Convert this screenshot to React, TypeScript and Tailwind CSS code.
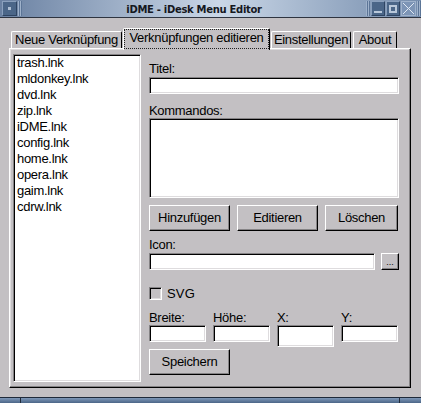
import React from "react";

const raised =
  "border border-t-white border-l-white border-r-black border-b-black shadow-[inset_-1px_-1px_0_#858385]";
const sunken =
  "border border-t-[#858385] border-l-[#858385] border-r-white border-b-white shadow-[inset_1px_1px_0_#000,inset_-1px_-1px_0_#dedcde]";

const files = [
  "trash.lnk",
  "mldonkey.lnk",
  "dvd.lnk",
  "zip.lnk",
  "iDME.lnk",
  "config.lnk",
  "home.lnk",
  "opera.lnk",
  "gaim.lnk",
  "cdrw.lnk",
];

function Stripes({ className }: { className: string }) {
  return (
    <div className={"flex h-[15px] " + className}>
      <div className="w-px bg-[#9fb2cb]" />
      <div className="w-px bg-[#5c7597]" />
      <div className="w-px bg-[#9fb2cb]" />
      <div className="w-px bg-[#5c7597]" />
    </div>
  );
}

function TitleBar() {
  return (
    <div className="flex h-[18px] items-start border-b border-[#2e3440] bg-[linear-gradient(to_right,#6a81a2,#cad7e7_52%,#748cac)]">
      <div className="ml-[2px] mt-px flex h-[15px] w-[15px] items-center justify-center border border-t-[#8aa0bd] border-l-[#8aa0bd] border-r-[#2f4563] border-b-[#2f4563] bg-[#4b6688]">
        <div className="h-[3px] w-[3px] bg-[#aebfd4]" />
      </div>
      <Stripes className="ml-px mt-px" />
      <div className="flex-1 pt-[4px] text-center font-['DejaVu_Sans',sans-serif] text-[10px] font-bold leading-[12px] text-[#15181f]">
        iDME - iDesk Menu Editor
      </div>
      <Stripes className="mt-px" />
      <div className="ml-px mt-px flex h-[15px] w-[14px] items-end justify-center border border-t-[#8aa0bd] border-l-[#8aa0bd] border-r-[#2f4563] border-b-[#2f4563] bg-[#4b6688] pb-[2px]">
        <div className="h-[2px] w-[8px] bg-[#b9c8da]" />
      </div>
      <div className="ml-px mt-px flex h-[15px] w-[14px] items-center justify-center border border-t-[#8aa0bd] border-l-[#8aa0bd] border-r-[#2f4563] border-b-[#2f4563] bg-[#4b6688]">
        <div className="h-[8px] w-[8px] border-2 border-[#b9c8da]" />
      </div>
      <div className="ml-px mt-px flex h-[15px] w-[15px] items-center justify-center border border-[#9fb2cb] bg-[#7d95b6]">
        <svg width="13" height="13" viewBox="0 0 13 13">
          <path d="M1 1 L12 12 M12 1 L1 12" stroke="#e0e8f2" strokeWidth="1" />
        </svg>
      </div>
      <Stripes className="ml-px mt-px" />
    </div>
  );
}

function Tab({ label, className }: { label: string; className: string }) {
  return (
    <div
      className={
        "flex h-[17px] items-center justify-center rounded-t-[2px] border-t border-l border-r border-t-white border-l-white border-r-black leading-[14px] " +
        className
      }
    >
      {label}
    </div>
  );
}

function Button({ label, className }: { label: string; className: string }) {
  return (
    <div
      className={
        "flex h-[26px] items-center justify-center leading-[14px] " +
        raised +
        " " +
        className
      }
    >
      {label}
    </div>
  );
}

export default function App() {
  return (
    <div className="flex h-[403px] w-[421px] flex-col overflow-hidden bg-[#c3c0c3] font-['Liberation_Sans',Arial,sans-serif] text-[13px] tracking-[-0.3px] text-black">
      <TitleBar />

      {/* tabs */}
      <div className="ml-[11px] mt-[10px] flex h-[20px] items-end">
        <Tab label="Neue Verknüpfung" className="w-[111px]" />
        <div className="relative z-10 -mb-[2px] ml-px flex h-[22px] w-[147px] items-start justify-center rounded-t-[2px] border-t border-l border-r border-t-white border-l-white border-r-black bg-[#c3c0c3] pt-[2px] leading-[14px]">
          <div className="absolute left-0 right-0 top-0 bottom-[1px] border border-dotted border-[#202020]" />
          Verknüpfungen editieren
        </div>
        <Tab label="Einstellungen" className="ml-px w-[80px]" />
        <Tab label="About" className="ml-[2px] w-[44px]" />
      </div>

      {/* pane */}
      <div className="ml-[9px] flex h-[340px] w-[402px] border border-t-white border-l-white border-r-black border-b-black pl-[3px] pt-[5px] shadow-[inset_-1px_-1px_0_#858385,inset_1px_1px_0_#dedcde]">
        <div className={"h-[328px] w-[128px] bg-white pl-[3px] leading-[16px] " + sunken}>
          {files.map((f) => (
            <div key={f}>{f}</div>
          ))}
        </div>

        <div className="ml-[8px] mt-[8px] flex w-[250px] flex-col">
          <div className="leading-[14px]">Titel:</div>
          <div className={"mt-px h-[17px] bg-white " + sunken} />

          <div className="mt-[10px] leading-[14px]">Kommandos:</div>
          <div className={"h-[80px] bg-white " + sunken} />

          <div className="mt-[7px] flex">
            <Button label="Hinzufügen" className="w-[81px]" />
            <Button label="Editieren" className="ml-[7px] w-[81px]" />
            <Button label="Löschen" className="ml-[7px] w-[73px]" />
          </div>

          <div className="mt-[7px] leading-[14px]">Icon:</div>
          <div className="mt-px flex">
            <div className={"h-[17px] w-[226px] bg-white " + sunken} />
            <div
              className={
                "ml-[6px] flex h-[17px] w-[18px] items-end justify-center pb-[2px] text-[9px] leading-none tracking-normal " +
                raised
              }
            >
              ...
            </div>
          </div>

          <div className="mt-[17px] flex h-[13px] items-center">
            <div className={"h-[13px] w-[13px] bg-[#c3c0c3] " + sunken} />
            <span className="ml-[5px] leading-[14px] tracking-[0.2px]">SVG</span>
          </div>

          <div className="mt-[11px] grid grid-cols-[57px_57px_57px_57px] items-start gap-x-[7px]">
            <div>
              <div className="leading-[14px]">Breite:</div>
              <div className={"h-[17px] bg-white " + sunken} />
            </div>
            <div>
              <div className="leading-[14px]">Höhe:</div>
              <div className={"h-[17px] bg-white " + sunken} />
            </div>
            <div>
              <div className="leading-[14px]">X:</div>
              <div className={"h-[22px] bg-white " + sunken} />
            </div>
            <div>
              <div className="leading-[14px]">Y:</div>
              <div className={"h-[17px] bg-white " + sunken} />
            </div>
          </div>

          <div className="mt-[2px] flex">
            <Button label="Speichern" className="w-[81px]" />
          </div>
        </div>
      </div>

      {/* bottom frame */}
      <div className="mt-auto flex h-[6px] border-t border-[#1f2a3a]">
        <div className="w-[20px] bg-[linear-gradient(to_bottom,#7f98b8,#4b6688)]" />
        <div className="w-px bg-[#1f2a3a]" />
        <div className="flex-1 bg-[linear-gradient(to_bottom,#7f98b8,#4b6688)]" />
        <div className="w-px bg-[#1f2a3a]" />
        <div className="w-[21px] bg-[linear-gradient(to_bottom,#7f98b8,#4b6688)]" />
      </div>
    </div>
  );
}
